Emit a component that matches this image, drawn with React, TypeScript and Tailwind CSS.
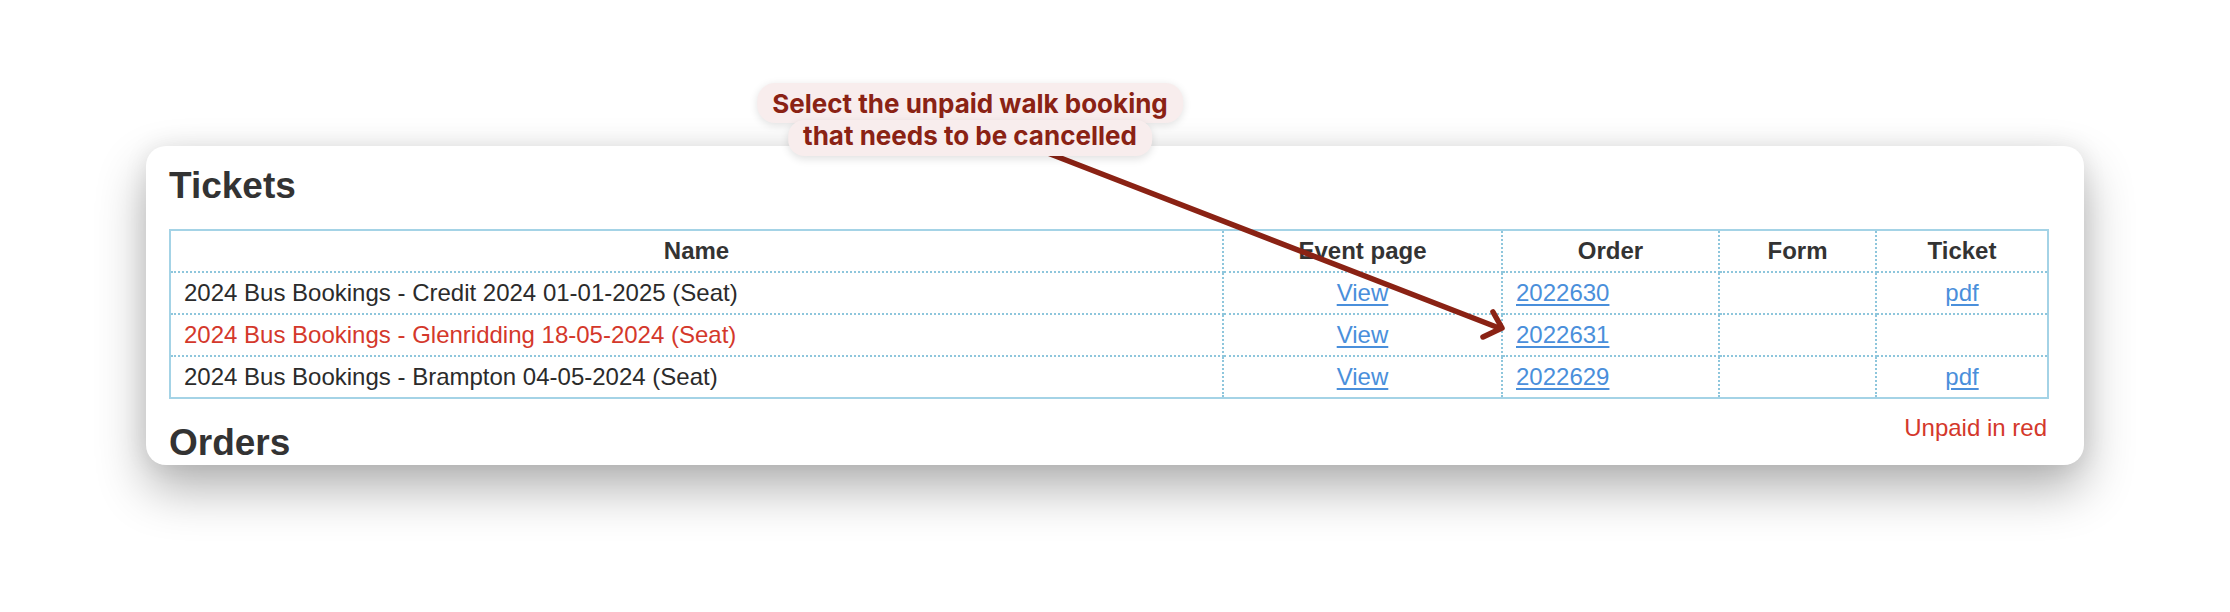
import React from 'react'

type Ticket = {
  name: string
  order: string
  pdf: boolean
  unpaid?: boolean
}

const tickets: Ticket[] = [
  { name: '2024 Bus Bookings - Credit 2024 01-01-2025 (Seat)', order: '2022630', pdf: true },
  { name: '2024 Bus Bookings - Glenridding 18-05-2024 (Seat)', order: '2022631', pdf: false, unpaid: true },
  { name: '2024 Bus Bookings - Brampton 04-05-2024 (Seat)', order: '2022629', pdf: true },
]

const cell = 'h-[42px] border-2 border-dotted border-[#8ec6dc] px-[13px] p-0'
const link = 'text-[#4a8fdb] underline decoration-[2px] underline-offset-[3px]'

export default function App() {
  return (
    <div className="relative w-[2230px] h-[612px] overflow-hidden bg-white pt-[146px] pl-[146px] font-['Liberation_Sans',Arial,sans-serif] text-[#333]">
      {/* Card */}
      <div className="w-[1938px] h-[319px] overflow-hidden rounded-[20px] bg-white pl-[23px] pr-[37px] pt-[21px] shadow-[0_24px_50px_rgba(0,0,0,0.3),0_0_24px_rgba(0,0,0,0.08)]">
        <h2 className="text-[37px] leading-[37px] font-bold">Tickets</h2>

        <table className="mt-[25px] w-[1878px] table-fixed border-collapse border-2 border-solid border-[#a4d3e6] text-[24px] leading-[28px]">
          <colgroup>
            <col className="w-[1053px]" />
            <col className="w-[279px]" />
            <col className="w-[217px]" />
            <col className="w-[157px]" />
            <col className="w-[172px]" />
          </colgroup>
          <thead>
            <tr>
              <th className={`${cell} text-center font-bold`}>Name</th>
              <th className={`${cell} text-center font-bold`}>Event page</th>
              <th className={`${cell} text-center font-bold`}>Order</th>
              <th className={`${cell} text-center font-bold`}>Form</th>
              <th className={`${cell} text-center font-bold`}>Ticket</th>
            </tr>
          </thead>
          <tbody>
            {tickets.map((t) => (
              <tr key={t.order}>
                <td className={`${cell} text-left ${t.unpaid ? 'text-[#d4382b]' : 'text-[#2b2b2b]'}`}>{t.name}</td>
                <td className={`${cell} text-center`}>
                  <a className={link}>View</a>
                </td>
                <td className={`${cell} text-left`}>
                  <a className={link}>{t.order}</a>
                </td>
                <td className={cell}></td>
                <td className={`${cell} text-center`}>{t.pdf && <a className={link}>pdf</a>}</td>
              </tr>
            ))}
          </tbody>
        </table>

        <div className="flex items-start justify-between">
          <h2 className="mt-[25px] text-[37px] leading-[37px] font-bold">Orders</h2>
          <p className="mt-[15px] text-[24px] leading-[28px] text-[#d4382b]">Unpaid in red</p>
        </div>
      </div>

      {/* Annotation arrow */}
      <svg className="pointer-events-none absolute left-0 top-0" width="2230" height="612" viewBox="0 0 2230 612">
        <g stroke="#8a2214" strokeWidth="5.5" strokeLinecap="round" strokeLinejoin="round" fill="none">
          <line x1="1040" y1="150" x2="1499" y2="328" />
          <polyline points="1493,312 1502,328 1483,337" />
        </g>
      </svg>

      {/* Annotation callout */}
      <div className="absolute left-[970px] top-[83px] flex -translate-x-1/2 flex-col items-center font-['Inter',sans-serif] text-[26px] font-bold leading-[31px] text-[#8a2214]">
        <span className="rounded-[18px] bg-[#f8eded] px-[15px] pt-[5px] pb-[4px] shadow-[0_2px_8px_rgba(0,0,0,0.12)]">
          Select the unpaid walk booking
        </span>
        <span className="-mt-[3px] rounded-[16px] bg-[#f8eded] px-[15px] pb-[5px] shadow-[0_3px_8px_rgba(0,0,0,0.12)]">
          that needs to be cancelled
        </span>
      </div>
    </div>
  )
}
